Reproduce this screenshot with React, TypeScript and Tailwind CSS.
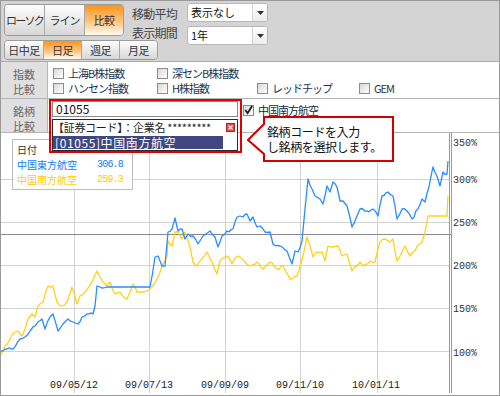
import React from 'react';

type Pt = [number, number];

// page coordinates (x, y) read off the reference
const BLUE: Pt[] = [
  [1, 352], [7, 350], [13, 350], [20, 340], [25, 338], [30, 332], [33, 328], [38, 323], [42, 320], [45, 330],
  [50, 318], [53, 315], [58, 332], [63, 325], [68, 320], [73, 323], [78, 325], [82, 318], [87, 315], [93, 315],
  [95, 307], [97, 287], [100, 288], [107, 288], [150, 288], [155, 258], [158, 257], [162, 267], [165, 267],
  [168, 233], [172, 230], [175, 219], [178, 232], [182, 230], [185, 240], [188, 235], [193, 237], [198, 245],
  [203, 237], [210, 232], [215, 238], [218, 248], [222, 237], [227, 232], [233, 230], [237, 218], [240, 217],
  [243, 218], [247, 215], [250, 222], [253, 218], [257, 228], [260, 227], [265, 233], [270, 233], [273, 245],
  [280, 247], [287, 252], [292, 265], [295, 252], [298, 253], [302, 242], [305, 210], [308, 180], [312, 190],
  [315, 197], [320, 200], [323, 205], [327, 187], [330, 193], [333, 183], [337, 188], [340, 202], [343, 202],
  [347, 207], [352, 228], [357, 217], [360, 210], [367, 212], [373, 210], [378, 217], [382, 197], [388, 193],
  [393, 197], [397, 220], [402, 210], [407, 212], [412, 220], [418, 210], [422, 200], [425, 203], [429, 188],
  [433, 168], [437, 177], [440, 187], [443, 173], [447, 175], [448, 162],
];

const YELLOW: Pt[] = [
  [1, 355], [5, 347], [10, 340], [15, 333], [18, 332], [22, 337], [25, 330], [28, 320], [32, 315], [35, 318],
  [38, 307], [40, 305], [43, 303], [48, 287], [53, 287], [57, 303], [62, 307], [67, 303], [72, 288], [77, 305],
  [80, 297], [85, 293], [92, 283], [97, 272], [100, 278], [103, 283], [107, 287], [110, 283], [115, 295],
  [120, 293], [127, 300], [130, 293], [133, 285], [137, 293], [143, 293], [150, 290], [157, 280], [162, 267],
  [167, 257], [168, 242], [172, 247], [175, 233], [178, 233], [182, 240], [185, 233], [190, 248], [193, 263],
  [197, 267], [200, 262], [207, 253], [212, 263], [217, 275], [220, 262], [227, 257], [232, 265], [238, 257],
  [245, 263], [250, 267], [257, 263], [263, 270], [270, 263], [277, 270], [283, 267], [290, 280], [297, 277],
  [300, 268], [303, 257], [307, 238], [310, 247], [313, 258], [317, 253], [322, 253], [325, 262], [328, 247],
  [333, 248], [338, 247], [342, 257], [347, 255], [352, 272], [357, 267], [360, 263], [363, 267], [370, 262],
  [375, 263], [380, 243], [385, 240], [390, 243], [393, 240], [397, 262], [402, 253], [405, 247], [410, 257],
  [413, 253], [422, 243], [425, 233], [428, 217], [447, 217], [448, 197],
];

// add small day-to-day wiggle between the traced points, keep flat stretches flat
const roughen = (pts: Pt[], seed: number): Pt[] => {
  const out: Pt[] = [];
  for (let i = 0; i < pts.length; i++) {
    const [x0, y0] = pts[i];
    out.push([x0, y0]);
    if (i === pts.length - 1) break;
    const [x1, y1] = pts[i + 1];
    const dx = x1 - x0;
    const flat = y0 === y1 && dx > 8;
    const n = Math.floor(dx / 2);
    for (let k = 1; k < n; k++) {
      const t = k / n;
      const r = Math.sin((i * 31 + k * 7 + seed) * 12.9898) * 43758.5453;
      const noise = flat ? 0 : (r - Math.floor(r) - 0.5) * 3;
      out.push([x0 + dx * t, y0 + (y1 - y0) * t + noise]);
    }
  }
  return out;
};

const toPath = (pts: Pt[]) => pts.map(([x, y], i) => `${i ? 'L' : 'M'}${x.toFixed(1)} ${y.toFixed(1)}`).join(' ');

const Seg: React.FC<{ active?: boolean; className?: string; children: React.ReactNode }> = ({ active, className = '', children }) => (
  <div
    className={`flex items-center justify-center whitespace-nowrap ${
      active ? 'bg-linear-to-b from-[#ff9300] via-[#ffc070] to-[#fffaf3]' : 'bg-linear-to-b from-[#fdfdfd] to-[#d7d7d7]'
    } ${className}`}
  >
    {children}
  </div>
);

const Select: React.FC<{ value: string }> = ({ value }) => (
  <div className="flex h-[19px] w-[81px] overflow-hidden rounded-[3px] border border-[#b8b8b8] bg-white">
    <div className="flex-1 pl-[3px] text-[11px] leading-[17px] text-[#111]">{value}</div>
    <div className="flex w-[15px] items-center justify-center border-l border-[#d4d4d4] bg-linear-to-b from-white to-[#ececec]">
      <svg width="7" height="4" viewBox="0 0 7 4">
        <path d="M0 0H7L3.5 4Z" fill="#333" />
      </svg>
    </div>
  </div>
);

const Check: React.FC<{ label: string; checked?: boolean }> = ({ label, checked }) => (
  <div className="flex items-center gap-[4px] whitespace-nowrap">
    <span className="flex h-[11px] w-[11px] items-center justify-center border border-[#8c8c8c] bg-linear-to-br from-[#d8d8d8] to-white">
      {checked && (
        <svg width="10" height="10" viewBox="0 0 10 10" className="-mt-[1px]">
          <path d="M1.5 5L4 8.5L9 0.5" fill="none" stroke="#1a1a1a" strokeWidth="2" />
        </svg>
      )}
    </span>
    <span>{label}</span>
  </div>
);

const App: React.FC = () => {
  const hGrid = [180, 223, 266, 309, 352];
  const vGrid = [74, 149, 225, 300, 377];
  const yLabels: [string, number][] = [
    ['350%', 143], ['300%', 180], ['250%', 223], ['200%', 266], ['150%', 309], ['100%', 353],
  ];
  const xLabels: [string, number][] = [
    ['09/05/12', 74], ['09/07/13', 149], ['09/09/09', 225], ['09/11/10', 300], ['10/01/11', 376],
  ];

  return (
    <div className="relative h-[396px] w-[500px] overflow-hidden border border-[#9a9a9a] bg-white font-['Noto_Sans_CJK_JP',sans-serif]">
      {/* toolbar */}
      <div className="h-[61px] border-b border-[#ababab] bg-[#d4d4d4]">
        <div className="flex h-[36px] items-start">
          <div className="ml-[3px] mt-[3px] flex h-[32px] w-[120px] overflow-hidden rounded-[4px] border border-[#9c9c9c] text-[11px] tracking-[-0.5px] text-[#333]">
            <Seg className="w-[40px] border-r border-[#a8a8a8] tracking-[-1.8px]">ローソク</Seg>
            <Seg className="w-[40px] border-r border-[#a8a8a8] tracking-[-1px]">ライン</Seg>
            <Seg active className="flex-1">比較</Seg>
          </div>
          <div className="ml-[8px] mt-[3px] flex w-[55px] flex-col whitespace-nowrap text-[12px] leading-[19px] tracking-[-0.75px] text-[#444]">
            <span>移動平均</span>
            <span>表示期間</span>
          </div>
          <div className="mt-[2px] flex flex-col gap-[4px]">
            <Select value="表示なし" />
            <Select value="1年" />
          </div>
        </div>
        <div className="ml-[3px] mt-[3px] flex h-[20px] w-[154px] overflow-hidden rounded-[4px] border border-[#9c9c9c] text-[11px] tracking-[-0.5px] text-[#333]">
          <Seg className="w-[39px] border-r border-[#a8a8a8]">日中足</Seg>
          <Seg active className="w-[38px] border-r border-[#a8a8a8]">日足</Seg>
          <Seg className="w-[38px] border-r border-[#a8a8a8]">週足</Seg>
          <Seg className="flex-1">月足</Seg>
        </div>
      </div>

      {/* index compare */}
      <div className="flex h-[37px] border-b border-[#b4b4b4]">
        <div className="flex w-[47px] flex-col items-center border-r border-[#b4b4b4] bg-[#e0e0e0] pt-[5px] text-[11px] leading-[15px] text-[#666]">
          <span>指数</span>
          <span>比較</span>
        </div>
        <div className="flex flex-col pl-[5px] pt-[4px] text-[11px] leading-[15px] tracking-[-1px] text-[#1d3350]">
          <div className="flex">
            <div className="w-[104px]"><Check label="上海B株指数" /></div>
            <div className="w-[100px]"><Check label="深センB株指数" /></div>
          </div>
          <div className="flex">
            <div className="w-[104px]"><Check label="ハンセン指数" /></div>
            <div className="w-[100px]"><Check label="H株指数" /></div>
            <div className="w-[102px]"><Check label="レッドチップ" /></div>
            <div><Check label="GEM" /></div>
          </div>
        </div>
      </div>

      {/* stock compare */}
      <div className="relative z-10 flex h-[34px] border-b border-[#b4b4b4]">
        <div className="flex h-[33px] w-[47px] flex-col items-center overflow-hidden border-r border-[#b4b4b4] bg-[#e0e0e0] pt-[5px] text-[11px] leading-[15px] text-[#666]">
          <span>銘柄</span>
          <span>比較</span>
        </div>
        <div className="relative ml-[4px] mt-[2px] h-[16px] w-[186px]">
          <div className="h-[16px] border border-[#8a8a8a] bg-white pl-[3px] text-[12px] leading-[14px] text-[#111]">01055</div>
          <div className="absolute left-0 top-[18px] flex h-[32px] w-[186px] flex-col border border-[#2a2a2a] bg-white text-[#222]">
            <div className="flex h-[15px] items-center justify-between pr-[2px]">
              <span className="whitespace-nowrap text-[11px] leading-[15px] tracking-[-0.3px]">【証券コード】：企業名 *********</span>
              <svg width="9" height="9" viewBox="0 0 9 9">
                <rect x="0.5" y="0.5" width="8" height="8" fill="#e24a4a" stroke="#c21f1f" />
                <path d="M2.5 2.5L6.5 6.5M6.5 2.5L2.5 6.5" stroke="#fff" strokeWidth="1.2" />
              </svg>
            </div>
            <div className="mt-[1px] h-[13px] w-[170px] whitespace-nowrap bg-[#3f4680] pl-[2px] text-[12px] leading-[13px] tracking-[0.6px] text-white">
              [01055]中国南方航空
            </div>
          </div>
          <div className="pointer-events-none absolute -left-[3px] -top-[2px] h-[54px] w-[193px] border-2 border-[#e00000]" />
        </div>
        <div className="ml-[5px] mt-[4px] text-[11px] leading-[15px] tracking-[-1px] text-[#0e2a48]">
          <Check label="中国南方航空" checked />
        </div>

        {/* callout */}
        <div className="absolute left-[246px] top-[17px] h-[46px] w-[147px]">
          <svg className="absolute inset-0" width="147" height="46" viewBox="0 0 147 46">
            <path d="M17 1H146V45H17V38L1 24L17 8Z" fill="#fff" stroke="#d40000" strokeWidth="2" />
          </svg>
          <div className="relative pl-[20px] pt-[8px] text-[12px] leading-[15px] tracking-[-0.4px] text-[#111]">
            <div>銘柄コードを入力</div>
            <div>し銘柄を選択します。</div>
          </div>
        </div>
      </div>

      {/* chart */}
      <div className="relative h-[260px]">
        <svg className="absolute inset-0" width="498" height="260" viewBox="1 134 498 260">
          {hGrid.map((y) => (
            <line key={y} x1={1} x2={449} y1={y + 0.5} y2={y + 0.5} stroke="#d2d2d2" />
          ))}
          {vGrid.map((x) => (
            <line key={x} x1={x + 0.5} x2={x + 0.5} y1={134} y2={394} stroke="#d2d2d2" />
          ))}
          <line x1={1} x2={451} y1={235.5} y2={235.5} stroke="#8a8a8a" />
          <path d={toPath(roughen(YELLOW, 3))} fill="none" stroke="#ffd11a" strokeWidth="1.3" strokeLinejoin="round" />
          <path d={toPath(roughen(BLUE, 11))} fill="none" stroke="#2b8cff" strokeWidth="1.3" strokeLinejoin="round" />
          <line x1={449.5} x2={449.5} y1={134} y2={394} stroke="#9a9a9a" />
          <line x1={451.5} x2={451.5} y1={134} y2={394} stroke="#9a9a9a" />
          {yLabels.map(([t, y]) => (
            <text key={t} x={453} y={y + 3.5} fontSize="10" fill="#333" fontFamily="'Liberation Mono', monospace">
              {t}
            </text>
          ))}
          {xLabels.map(([t, x]) => (
            <text key={t} x={x} y={389} fontSize="10" fill="#222" textAnchor="middle" fontFamily="'Liberation Mono', monospace">
              {t}
            </text>
          ))}
        </svg>

        <div className="absolute left-[11px] top-[6px] w-[121px] border border-[#bcbcbc] bg-white pb-[2px] pl-[4px] pr-[9px] pt-[2px] text-[10px] leading-[15px]">
          <div className="text-[#333]">日付</div>
          <div className="flex justify-between text-[#0f7bff]">
            <span>中国東方航空</span>
            <span className="font-['Liberation_Mono',monospace] text-[10px] tracking-[-0.8px]">306.8</span>
          </div>
          <div className="flex justify-between text-[#ffcc00]">
            <span>中国南方航空</span>
            <span className="font-['Liberation_Mono',monospace] text-[10px] tracking-[-0.8px]">259.3</span>
          </div>
        </div>
      </div>
    </div>
  );
};

export default App;
